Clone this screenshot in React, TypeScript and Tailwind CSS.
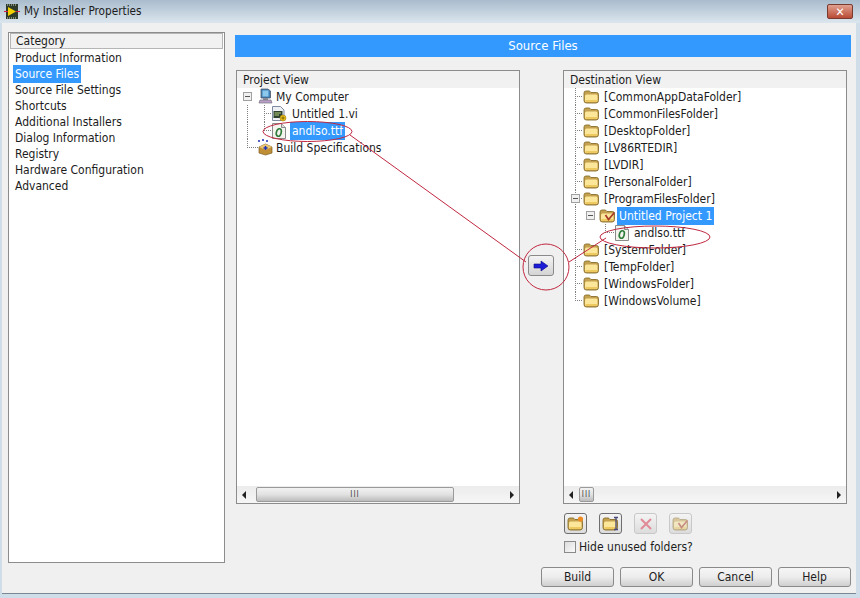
import { ReactNode } from "react";

const categories = [
  "Product Information",
  "Source Files",
  "Source File Settings",
  "Shortcuts",
  "Additional Installers",
  "Dialog Information",
  "Registry",
  "Hardware Configuration",
  "Advanced",
];

const DOT = "#808080";

function Lead({
  w,
  verts = [],
  halves = [],
  hline,
  box,
}: {
  w: number;
  verts?: number[];
  halves?: number[];
  hline?: [number, number];
  box?: number;
}) {
  return (
    <svg width={w} height={17} className="shrink-0">
      <g stroke={DOT} strokeDasharray="1 1" fill="none">
        {verts.map((x) => (
          <line key={x} x1={x + 0.5} x2={x + 0.5} y1={0} y2={17} />
        ))}
        {halves.map((x) => (
          <line key={x} x1={x + 0.5} x2={x + 0.5} y1={0} y2={9} />
        ))}
        {hline && <line x1={hline[0]} x2={hline[1]} y1={8.5} y2={8.5} />}
      </g>
      {box !== undefined && (
        <g>
          <rect x={box - 4 + 0.5} y={4.5} width={8} height={8} fill="#f0f0f0" stroke="#a0a0a0" />
          <line x1={box - 2} x2={box + 3} y1={8.5} y2={8.5} stroke="#555" />
        </g>
      )}
    </svg>
  );
}

function Folder({ dim = false, check = false, star = false, beam = false }: { dim?: boolean; check?: boolean; star?: boolean; beam?: boolean }) {
  return (
    <svg width={17} height={15} viewBox="0 0 17 15" className={`shrink-0 ${dim ? "opacity-50" : ""}`}>
      <path d="M1 4 Q1 2 3 2 H6 Q7 2 8 3.5 H13.5 Q15.5 3.5 15.5 5.5 V11.5 Q15.5 14 13 14 H3.5 Q1 14 1 11.5 Z" fill="#c4a14e" stroke="#8a6f2c" strokeWidth="0.9" />
      <path d="M2 7 Q2 5.5 3.5 5.5 H13 Q14.5 5.5 14.5 7 V11.5 Q14.5 13 13 13 H3.5 Q2 13 2 11.5 Z" fill="#fbe69a" />
      <path d="M2.5 11 H14 V11.8 Q14 13 13 13 H3.5 Q2.5 13 2.5 11.8 Z" fill="#eec95f" />
      {check && <path d="M6.5 7 L9.5 11.5 L15.5 4.5" stroke="#a83a28" strokeWidth="1.7" fill="none" />}
      {star && <circle cx={13.5} cy={3} r={2.6} fill="#ee8a22" />}
      {beam && <path d="M12 1.5 H16 M14 1.5 V13.5 M12 13.5 H16" stroke="#4a4a78" strokeWidth="1.3" fill="none" />}
    </svg>
  );
}

function FontFile() {
  return (
    <svg width={14} height={16} viewBox="0 0 14 16" className="shrink-0">
      <path d="M.5 .5 H9.5 L13.5 4.5 V15.5 H.5 Z" fill="#f4f4ee" stroke="#8a8a8a" />
      <path d="M9.5 .5 V4.5 H13.5" fill="#dcdcdc" stroke="#8a8a8a" />
      <ellipse cx={6.8} cy={9.5} rx={2.4} ry={3.8} fill="none" stroke="#2f7d3a" strokeWidth="1.6" transform="rotate(16 6.8 9.5)" />
    </svg>
  );
}

function Computer() {
  return (
    <svg width={15} height={17} viewBox="0 0 15 17" className="shrink-0">
      <path d="M3 1 H10 L12.5 3 V10 H3 Z" fill="#3f7fb8" stroke="#4c5664" strokeWidth="0.8" />
      <rect x={4.5} y={2.5} width={6} height={6} fill="#8cc7ec" />
      <rect x={5} y={10} width={5} height={2} fill="#8c8c96" />
      <path d="M2 12 H13 L14 15 H1 Z" fill="#b99ec8" stroke="#77727f" strokeWidth="0.7" />
    </svg>
  );
}

function ViFile() {
  return (
    <svg width={15} height={16} viewBox="0 0 15 16" className="shrink-0">
      <path d="M.5 .5 H8.5 L12 4 V14.5 H.5 Z" fill="#eef0f4" stroke="#7d8aa0" />
      <rect x={1.5} y={5} width={9} height={7} fill="#2e4030" />
      <path d="M2.5 7 H9 M2.5 9 H7" stroke="#b7d27a" />
      <circle cx={11} cy={12} r={3} fill="#f2c518" stroke="#9a7a10" strokeWidth="0.6" />
      <path d="M11 10.2 V13.8 M9.2 12 H12.8" stroke="#5a4a08" strokeWidth="0.7" />
    </svg>
  );
}

function BuildSpec() {
  return (
    <svg width={15} height={17} viewBox="0 0 15 17" className="shrink-0">
      <path d="M0 2 h2 M4 1 h2 M8 2 h2" stroke="#1c2fb0" strokeWidth="1.6" />
      <path d="M1 8 L7.5 5 L14 8 V14 L7.5 16 L1 14 Z" fill="#c08f35" stroke="#7d5c1f" strokeWidth="0.7" />
      <path d="M1 8 L7.5 11 L14 8 L7.5 5 Z" fill="#e8c574" />
      <path d="M7.5 7 V11 M5.5 9 H9.5" stroke="#1c2fb0" strokeWidth="1.4" />
    </svg>
  );
}

function Row({ children }: { children: ReactNode }) {
  return <div className="flex h-[17px] items-center text-[12px] whitespace-nowrap">{children}</div>;
}

function ScrollBar({ thumb, left }: { thumb: string; left: string }) {
  return (
    <div className="flex h-[17px] items-center justify-between bg-gradient-to-b from-[#ececec] to-[#f6f6f6] px-[5px]">
      <span className="h-0 w-0 border-y-[4px] border-r-[4px] border-y-transparent border-r-[#222]" />
      <div className={`${left} flex flex-1`}>
        <div className={`${thumb} flex h-[15px] items-center justify-center rounded-[2px] border border-[#9a9a9a] bg-gradient-to-b from-[#f2f2f2] via-[#e2e2e2] to-[#bcbcbc] text-[8px] tracking-[1px] text-[#444]`}>
          III
        </div>
      </div>
      <span className="h-0 w-0 border-y-[4px] border-l-[4px] border-y-transparent border-l-[#222]" />
    </div>
  );
}

function PanelShell({
  title,
  width,
  thumb,
  left,
  children,
}: {
  title: string;
  width: string;
  thumb: string;
  left: string;
  children: ReactNode;
}) {
  return (
    <div className={`${width} flex h-[434px] flex-col border border-[#8c8c8c] bg-white`}>
      <div className="h-[17px] bg-[#f1f1f1] pl-[6px] text-[12px] leading-[18px]">{title}</div>
      <div className="flex-1">{children}</div>
      <ScrollBar thumb={thumb} left={left} />
    </div>
  );
}

function DestFolder({ name, last = false, box = false }: { name: string; last?: boolean; box?: boolean }) {
  return (
    <Row>
      <Lead
        w={14}
        verts={last ? [] : [6]}
        halves={last ? [6] : []}
        hline={[6, 14]}
        box={box ? 6 : undefined}
      />
      <span className="mr-[4px] flex">
        <Folder />
      </span>
      {name}
    </Row>
  );
}

function ToolButton({ children, dim = false }: { children: ReactNode; dim?: boolean }) {
  return (
    <div className={`flex h-[21px] w-[23px] items-center justify-center rounded-[3px] border bg-gradient-to-b from-[#f4f4f4] to-[#dcdcdc] ${dim ? "border-[#c8c8c8]" : "border-[#6e6e6e]"}`}>
      {children}
    </div>
  );
}

function FootButton({ label }: { label: string }) {
  return (
    <div className="flex h-[20px] w-[73px] items-center justify-center rounded-[3px] border border-[#8a8a8a] bg-gradient-to-b from-[#f6f6f6] via-[#ececec] to-[#cfcfcf] text-[12px]">
      {label}
    </div>
  );
}

export default function App() {
  return (
    <div className="relative h-[598px] w-[860px] overflow-hidden bg-[#cfdde8] [font-family:'DejaVu_Sans_Condensed','Noto_Sans',sans-serif] text-[#1c1c1c]">
      <div className="flex h-[23px] items-center justify-between bg-gradient-to-b from-[#a9bccd] to-[#dce6ee] pl-[4px] pr-[7px]">
        <div className="flex items-center gap-[4px] text-[11.7px]">
          <svg width={16} height={15} viewBox="0 0 16 15">
            <rect x={2} y={0} width={12} height={15} fill="#2e3a2a" />
            <path d="M3 1 H13 M3 14 H13" stroke="#d8d8c8" strokeDasharray="1 1" />
            <path d="M4 3 L12 7.5 L4 12 Z" fill="#f5d000" />
            <path d="M0 7.5 H4 M12 7.5 H16" stroke="#d02040" />
          </svg>
          My Installer Properties
        </div>
        <div className="flex h-[15px] w-[26px] items-center justify-center rounded-[2px] border border-[#7a3a30] bg-gradient-to-b from-[#e0a090] to-[#b84a34] text-[12px] leading-none font-bold text-white">
          ✕
        </div>
      </div>

      <div className="ml-[2px] mr-[4px] flex h-[571px] flex-col border-b border-[#7a8a94] bg-[#f0f0f0]">
        <div className="flex">
          <div className="ml-[6px] mt-[9px] flex h-[531px] w-[217px] flex-col border border-[#8c8c8c] bg-white">
            <div className="mx-[1px] h-[16px] border border-[#b5b5b5] bg-[#f1f1f1] pl-[5px] text-[12px] leading-[15px]">Category</div>
            <div className="pl-[4px] pt-[1px]">
              {categories.map((c) => (
                <div key={c} className="flex h-[16px] items-center pl-[2px] text-[12px]">
                  <span className={c === "Source Files" ? "-ml-[2px] bg-[#3399ff] px-[2px] text-white" : ""}>{c}</span>
                </div>
              ))}
            </div>
          </div>

          <div className="ml-[10px] mt-[12px] w-[616px]">
            <div className="flex h-[22px] items-center justify-center bg-[#3399ff] text-[13px] text-white">Source Files</div>
            <div className="ml-[1px] mt-[13px] flex">
              <PanelShell title="Project View" width="w-[284px]" thumb="w-[198px]" left="pl-[10px]">
                <div className="pl-[5px]">
                  <Row>
                    <Lead w={16} box={5} />
                    <Computer />
                    <span className="ml-[3px]">My Computer</span>
                  </Row>
                  <Row>
                    <Lead w={30} verts={[5, 22]} hline={[22, 30]} />
                    <ViFile />
                    <span className="ml-[5px]">Untitled 1.vi</span>
                  </Row>
                  <Row>
                    <Lead w={30} verts={[5]} halves={[22]} hline={[22, 30]} />
                    <FontFile />
                    <span className="ml-[4px] bg-[#3399ff] px-[2px] text-white">andlso.ttf</span>
                  </Row>
                  <Row>
                    <Lead w={16} halves={[5]} hline={[5, 16]} />
                    <BuildSpec />
                    <span className="ml-[3px]">Build Specifications</span>
                  </Row>
                </div>
              </PanelShell>

              <div className="flex w-[43px] items-start justify-start pl-[8px] pt-[185px]">
                <div className="flex h-[21px] w-[26px] items-center justify-center rounded-[3px] border border-[#8a8a8a] bg-gradient-to-b from-[#f4f4f4] to-[#d4d4d4]">
                  <svg width={16} height={12} viewBox="0 0 16 12">
                    <path d="M1 4 H8 V1 L15 6 L8 11 V8 H1 Z" fill="#1c1cd8" stroke="#0b0b80" strokeWidth="0.6" />
                  </svg>
                </div>
              </div>

              <PanelShell title="Destination View" width="w-[284px]" thumb="w-[15px]" left="pl-[6px]">
                <div className="pl-[5px]">
                  <DestFolder name="[CommonAppDataFolder]" />
                  <DestFolder name="[CommonFilesFolder]" />
                  <DestFolder name="[DesktopFolder]" />
                  <DestFolder name="[LV86RTEDIR]" />
                  <DestFolder name="[LVDIR]" />
                  <DestFolder name="[PersonalFolder]" />
                  <DestFolder name="[ProgramFilesFolder]" box />
                  <Row>
                    <Lead w={30} verts={[6]} box={21} />
                    <Folder check />
                    <span className="ml-[1px] bg-[#3399ff] px-[2px] text-white">Untitled Project 1</span>
                  </Row>
                  <Row>
                    <Lead w={46} verts={[6]} halves={[36]} hline={[36, 46]} />
                    <FontFile />
                    <span className="ml-[5px]">andlso.ttf</span>
                  </Row>
                  <DestFolder name="[SystemFolder]" />
                  <DestFolder name="[TempFolder]" />
                  <DestFolder name="[WindowsFolder]" />
                  <DestFolder name="[WindowsVolume]" last />
                </div>
              </PanelShell>
            </div>

            <div className="ml-[329px] mt-[9px] flex gap-[12px]">
              <ToolButton><Folder star /></ToolButton>
              <ToolButton><Folder beam /></ToolButton>
              <ToolButton dim>
                <svg width={14} height={14} viewBox="0 0 14 14">
                  <path d="M2 2 L12 12 M12 2 L2 12" stroke="#e08a98" strokeWidth="2" />
                </svg>
              </ToolButton>
              <ToolButton dim><Folder dim check /></ToolButton>
            </div>
            <div className="ml-[329px] mt-[5px] flex h-[16px] items-center gap-[3px] text-[12px]">
              <span className="h-[12px] w-[12px] border border-[#8a8a8a] bg-gradient-to-br from-[#dcdcdc] to-[#fafafa]" />
              Hide unused folders?
            </div>
          </div>
        </div>

        <div className="mt-[4px] flex justify-end gap-[6px] pr-[5px]">
          <FootButton label="Build" />
          <FootButton label="OK" />
          <FootButton label="Cancel" />
          <FootButton label="Help" />
        </div>
      </div>

      <svg width={860} height={598} className="pointer-events-none absolute top-0 left-0">
        <g stroke="#c02840" fill="none" strokeWidth="1">
          <ellipse cx={307.5} cy={131.5} rx={44.5} ry={10} />
          <line x1={350} y1={135} x2={526} y2={262} />
          <circle cx={546} cy={267} r={23} />
          <line x1={569} y1={262} x2={606} y2={238} />
          <ellipse cx={655} cy={237} rx={55} ry={11} />
        </g>
      </svg>
    </div>
  );
}
